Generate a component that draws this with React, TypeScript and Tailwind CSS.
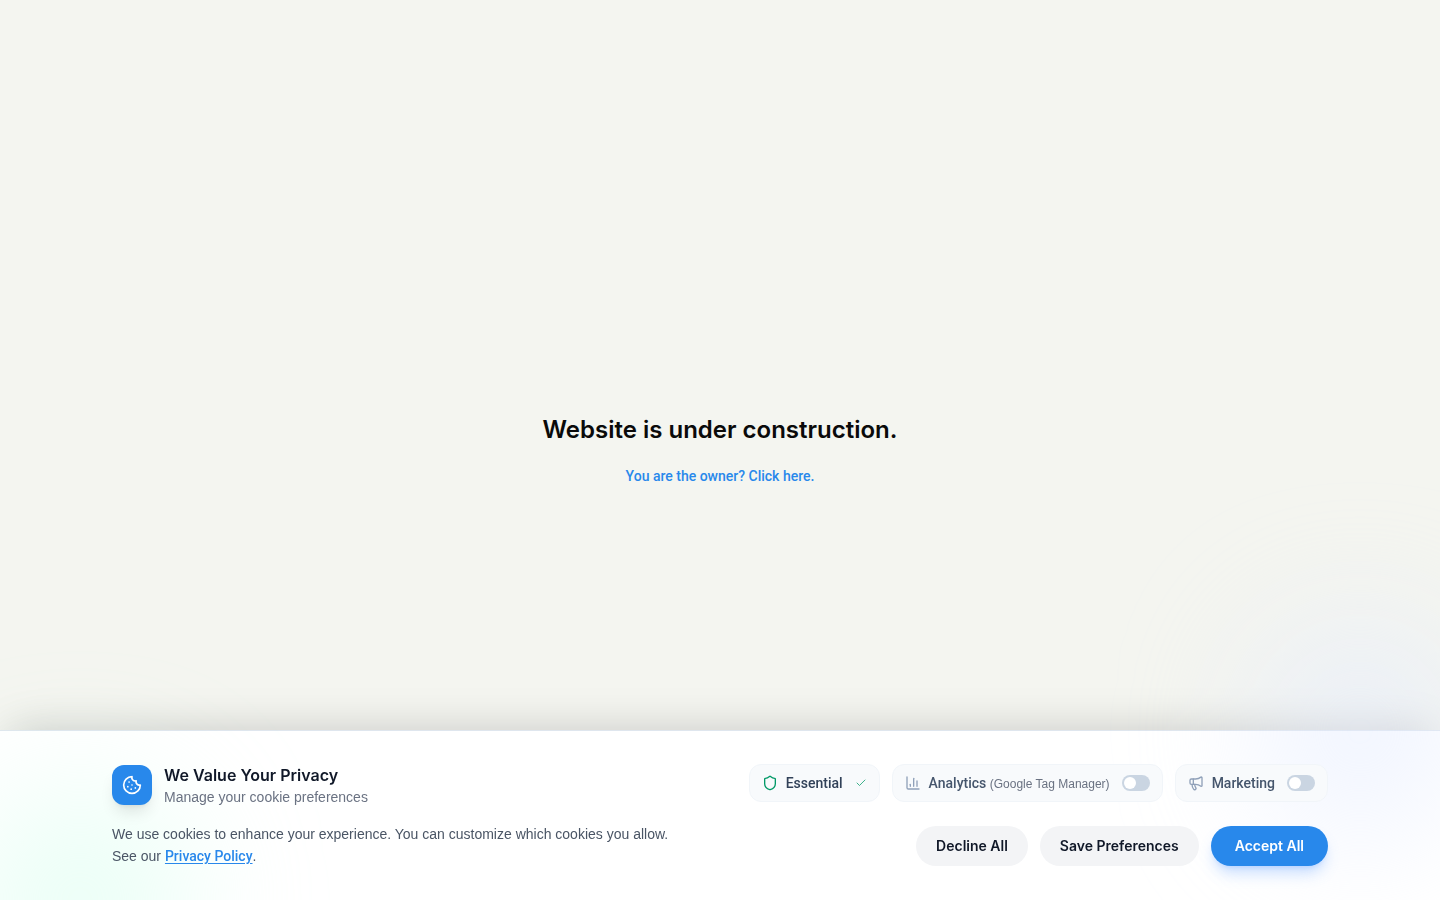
import type { ReactNode } from "react";
import { ChartColumn, Check, Cookie, Megaphone, Shield } from "lucide-react";

const pill = "flex items-center gap-3 rounded-xl border border-slate-100 bg-slate-50 px-3 py-2";
const pillText = "font-['Roboto','Liberation_Sans',sans-serif] text-sm font-medium";
const button = "h-10 rounded-full text-sm font-semibold font-['Inter',sans-serif] whitespace-nowrap";

function Toggle({ id, icon, children }: { id: string; icon: ReactNode; children: ReactNode }) {
    return (
        <div className={pill}>
            <label htmlFor={id} className="flex items-center gap-2 whitespace-nowrap text-slate-600">
                {icon}
                {children}
            </label>
            <input
                id={id}
                type="checkbox"
                role="switch"
                className="flex h-4 w-7 shrink-0 cursor-pointer appearance-none items-center rounded-full bg-slate-300 px-0.5 before:size-3 before:rounded-full before:bg-white checked:justify-end checked:bg-[#2888eb]"
            />
        </div>
    );
}

function CookieBanner() {
    return (
        <section
            aria-label="Cookie preferences"
            className="fixed inset-x-0 bottom-0 border-t border-slate-300/60 bg-white font-['Liberation_Sans',sans-serif] shadow-[0_-12px_40px_-12px_rgba(0,0,0,0.18)]"
        >
            {/* Soft glows */}
            <div className="pointer-events-none absolute -top-28 -right-8 size-56 rounded-full bg-[#e4ecff]/50 blur-3xl" />
            <div className="pointer-events-none absolute -bottom-28 -left-8 size-56 rounded-full bg-[#d6ffed]/50 blur-3xl" />

            <div className="relative mx-auto flex max-w-7xl flex-col gap-6 px-8 pt-8 pb-[33px] lg:flex-row lg:items-center lg:justify-between">
                <div>
                    <div className="mb-4 flex items-center gap-3">
                        <div className="flex size-10 items-center justify-center rounded-xl bg-[#2888eb] text-white shadow-lg shadow-black/10">
                            <Cookie size={20} strokeWidth={2} />
                        </div>
                        <div>
                            <h2 className="font-['Inter',sans-serif] text-base font-semibold text-gray-900">We Value Your Privacy</h2>
                            <p className="text-sm text-gray-500">Manage your cookie preferences</p>
                        </div>
                    </div>
                    <p className="text-sm leading-[22px] text-gray-600">
                        We use cookies to enhance your experience. You can customize which cookies you allow.
                        <br />
                        See our{" "}
                        <a
                            href="#privacy"
                            className="font-['Roboto','Liberation_Sans',sans-serif] font-medium text-[#2888eb] underline underline-offset-2"
                        >
                            Privacy Policy
                        </a>
                        .
                    </p>
                </div>

                <div className="flex flex-col gap-6 lg:items-end">
                    <div className="flex flex-wrap gap-3">
                        <div className={pill}>
                            <span className="flex items-center gap-2 text-slate-700">
                                <Shield size={16} className="text-emerald-600" />
                                <span className={pillText}>Essential</span>
                            </span>
                            <Check size={12} strokeWidth={1.5} className="text-emerald-600" />
                        </div>
                        <Toggle id="analytics" icon={<ChartColumn size={16} className="text-slate-400" />}>
                            <span className={pillText}>
                                Analytics{" "}
                                <span className="font-['Liberation_Sans',sans-serif] text-xs font-normal text-gray-500">
                                    (Google Tag Manager)
                                </span>
                            </span>
                        </Toggle>
                        <Toggle id="marketing" icon={<Megaphone size={16} className="text-slate-400" />}>
                            <span className={pillText}>Marketing</span>
                        </Toggle>
                    </div>
                    <div className="flex flex-wrap gap-3">
                        <button type="button" className={`${button} bg-gray-100 px-5 text-gray-900`}>
                            Decline All
                        </button>
                        <button type="button" className={`${button} bg-gray-100 px-5 text-gray-900`}>
                            Save Preferences
                        </button>
                        <button type="button" className={`${button} bg-[#2888eb] px-6 text-white shadow-lg shadow-blue-500/25`}>
                            Accept All
                        </button>
                    </div>
                </div>
            </div>
        </section>
    );
}

export default function App() {
    return (
        <>
            <main className="flex min-h-screen flex-col items-center justify-center gap-5 bg-[#f4f5f0] text-center">
                <h1 className="font-['Inter',sans-serif] text-2xl font-semibold text-neutral-950">Website is under construction.</h1>
                <a href="#login" className="font-['Roboto','Liberation_Sans',sans-serif] text-sm font-medium text-[#2888eb]">
                    You are the owner? Click here.
                </a>
            </main>
            <CookieBanner />
        </>
    );
}
